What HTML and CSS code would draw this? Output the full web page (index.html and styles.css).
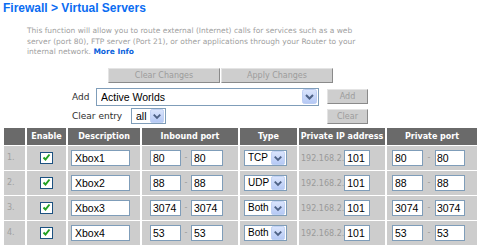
FILE: index.html
```html
<!DOCTYPE html>
<html>
<head>
<meta charset="utf-8">
<title>Virtual Servers</title>
<link rel="stylesheet" href="styles.css">
</head>
<body>
<h1 class="title">Firewall &gt; Virtual Servers</h1>
<p class="intro">This function will allow you to route external (Internet) calls for services such as a web<br>server (port 80), FTP server (Port 21), or other applications through your Router to your<br>internal network. <a class="more" href="#">More Info</a></p>

<div class="actions">
  <button class="btn btn-wide">Clear Changes</button>
  <button class="btn btn-wide">Apply Changes</button>
</div>

<div class="entry">
  <div class="field">
    <span class="lbl lbl-add">Add</span>
    <select class="sel sel-app"><option>Active Worlds</option></select>
  </div>
  <button class="btn btn-small">Add</button>
  <div class="field">
    <span class="lbl lbl-clear">Clear entry</span>
    <select class="sel sel-all"><option>all</option></select>
  </div>
  <button class="btn btn-small">Clear</button>
</div>

<table class="grid">
  <colgroup>
    <col class="c-idx"><col class="c-en"><col class="c-desc"><col class="c-in"><col class="c-type"><col class="c-ip"><col class="c-priv">
  </colgroup>
  <thead>
    <tr><th></th><th>Enable</th><th>Description</th><th>Inbound port</th><th>Type</th><th>Private IP address</th><th>Private port</th></tr>
  </thead>
  <tbody>
    <tr>
      <td class="idx">1.</td>
      <td class="center"><input type="checkbox" class="chk" checked></td>
      <td class="desc"><input class="txt txt-desc" value="Xbox1"></td>
      <td class="ports"><input class="txt txt-port" value="80"><span class="dash">-</span><input class="txt txt-port2" value="80"></td>
      <td class="type"><select class="sel sel-type"><option>TCP</option></select></td>
      <td class="ip"><span class="ipfix">192.168.2.</span><input class="txt txt-ip" value="101"></td>
      <td class="pports"><input class="txt txt-pport" value="80"><span class="dash dash-wide">-</span><input class="txt txt-pport2" value="80"></td>
    </tr>
    <tr>
      <td class="idx">2.</td>
      <td class="center"><input type="checkbox" class="chk" checked></td>
      <td class="desc"><input class="txt txt-desc" value="Xbox2"></td>
      <td class="ports"><input class="txt txt-port" value="88"><span class="dash">-</span><input class="txt txt-port2" value="88"></td>
      <td class="type"><select class="sel sel-type"><option>UDP</option></select></td>
      <td class="ip"><span class="ipfix">192.168.2.</span><input class="txt txt-ip" value="101"></td>
      <td class="pports"><input class="txt txt-pport" value="88"><span class="dash dash-wide">-</span><input class="txt txt-pport2" value="88"></td>
    </tr>
    <tr>
      <td class="idx">3.</td>
      <td class="center"><input type="checkbox" class="chk" checked></td>
      <td class="desc"><input class="txt txt-desc" value="Xbox3"></td>
      <td class="ports"><input class="txt txt-port" value="3074"><span class="dash">-</span><input class="txt txt-port2" value="3074"></td>
      <td class="type"><select class="sel sel-type"><option>Both</option></select></td>
      <td class="ip"><span class="ipfix">192.168.2.</span><input class="txt txt-ip" value="101"></td>
      <td class="pports"><input class="txt txt-pport" value="3074"><span class="dash dash-wide">-</span><input class="txt txt-pport2" value="3074"></td>
    </tr>
    <tr>
      <td class="idx">4.</td>
      <td class="center"><input type="checkbox" class="chk" checked></td>
      <td class="desc"><input class="txt txt-desc" value="Xbox4"></td>
      <td class="ports"><input class="txt txt-port" value="53"><span class="dash">-</span><input class="txt txt-port2" value="53"></td>
      <td class="type"><select class="sel sel-type"><option>Both</option></select></td>
      <td class="ip"><span class="ipfix">192.168.2.</span><input class="txt txt-ip" value="101"></td>
      <td class="pports"><input class="txt txt-pport" value="53"><span class="dash dash-wide">-</span><input class="txt txt-pport2" value="53"></td>
    </tr>
  </tbody>
</table>
</body>
</html>
```

FILE: styles.css
```css
* { box-sizing: border-box; }

body {
  margin: 0;
  background: #fff;
  font-family: "DejaVu Sans", Verdana, sans-serif;
  overflow: hidden;
}

.title {
  margin: 1px 0 0 3px;
  font: bold 12px/14px "Liberation Sans", Arial, sans-serif;
  color: #0a6cf2;
}

.intro {
  margin: 11px 0 0 27px;
  font-size: 7.5px;
  line-height: 10.5px;
  color: #a0a0a0;
}

.more {
  color: #0a62dc;
  font-weight: bold;
  text-decoration: none;
}

.actions {
  display: flex;
  gap: 1px;
  margin: 10px 0 0 108px;
}

.btn {
  height: 15px;
  padding: 0;
  background: #cecece;
  border: 1px solid;
  border-color: #e4e4e4 #8a8a8a #8a8a8a #e4e4e4;
  color: #9c9c9c;
  font: 8px/13px "DejaVu Sans", Verdana, sans-serif;
}

.btn-wide { width: 112px; }
.btn-small { width: 41px; margin-top: 1px; }

.entry {
  display: grid;
  grid-template-columns: 255px 41px;
  row-gap: 2px;
  align-items: start;
  margin: 5px 0 0 72px;
}

.field {
  display: flex;
  align-items: center;
}

.lbl {
  font-size: 9px;
  color: #2e2e2e;
}

.lbl-add { width: 24px; }
.lbl-clear { width: 59px; }

.sel {
  appearance: none;
  -webkit-appearance: none;
  margin: 0;
  border: 1px solid #7f9db9;
  border-radius: 0;
  background: #fff url("data:image/svg+xml,%3Csvg xmlns='http://www.w3.org/2000/svg' width='15' height='15'%3E%3Cdefs%3E%3ClinearGradient id='g' x1='0' y1='0' x2='0' y2='1'%3E%3Cstop offset='0' stop-color='%23dbe5fc'/%3E%3Cstop offset='1' stop-color='%23b4c8f5'/%3E%3C/linearGradient%3E%3C/defs%3E%3Crect x='.5' y='.5' width='14' height='14' rx='2' fill='url(%23g)' stroke='%23bccdf2'/%3E%3Cpath d='M4 6l3.5 3.5L11 6' fill='none' stroke='%234d6185' stroke-width='2'/%3E%3C/svg%3E") no-repeat right 1px center;
  color: #000;
  font: 10.5px/14px "Liberation Sans", Arial, sans-serif;
  padding: 0 0 0 4px;
}

.sel-app { width: 223px; height: 18px; }
.sel-all { width: 35px; height: 16px; background-size: 14px 14px; }

.grid {
  border-collapse: separate;
  border-spacing: 2px 1px;
  table-layout: fixed;
  width: 477px;
  margin: 3px 0 0 2px;
  font-size: 8px;
}

.c-idx { width: 21px; }
.c-en { width: 39px; }
.c-desc { width: 72px; }
.c-in { width: 96px; }
.c-type { width: 57px; }
.c-ip { width: 86px; }
.c-priv { width: 90px; }

.grid th {
  background: #6a6a6a;
  color: #fff;
  font-weight: bold;
  height: 17px;
  padding: 0;
  white-space: nowrap;
}

.grid td {
  background: #cdcdcd;
  height: 24px;
  padding: 0;
  white-space: nowrap;
}

.grid td.idx {
  color: #a0a0a0;
  padding-left: 3px;
}

.center { text-align: center; }

.chk {
  appearance: none;
  -webkit-appearance: none;
  width: 13px;
  height: 12px;
  margin: 0;
  vertical-align: middle;
  border: 1px solid #1c5180;
  background: #fff url("data:image/svg+xml,%3Csvg xmlns='http://www.w3.org/2000/svg' width='9' height='9'%3E%3Cpath d='M1.5 4.5l2 2L7.5 1.5' fill='none' stroke='%2321a121' stroke-width='2'/%3E%3C/svg%3E") no-repeat center;
}

.txt {
  height: 16px;
  margin: 0;
  border: 1px solid #7f9db9;
  background: #fff;
  color: #000;
  font: 10.5px "Liberation Sans", Arial, sans-serif;
  padding: 0 0 0 2px;
  vertical-align: middle;
}

.grid td.desc { padding-left: 3px; }
.txt-desc { width: 59px; padding-left: 3px; }

.grid td.ports { padding-left: 8px; }
.txt-port { width: 31px; }
.txt-port2 { width: 32px; }

.dash {
  display: inline-block;
  width: 10px;
  text-align: center;
  color: #9a9a9a;
  vertical-align: middle;
}

.dash-wide { width: 12px; }

.grid td.type { padding-left: 4px; }
.sel-type {
  width: 43px;
  height: 16px;
  font-size: 10px;
  line-height: 14px;
  padding-left: 3px;
  background-size: 14px 14px;
  vertical-align: middle;
}

.grid td.ip { padding-left: 2px; }
.ipfix {
  color: #9a9a9a;
  font-size: 8px;
  vertical-align: middle;
}
.txt-ip { width: 26px; }

.grid td.pports { padding-left: 5px; }
.txt-pport { width: 31px; }
.txt-pport2 { width: 30px; padding-left: 1px; }
```
